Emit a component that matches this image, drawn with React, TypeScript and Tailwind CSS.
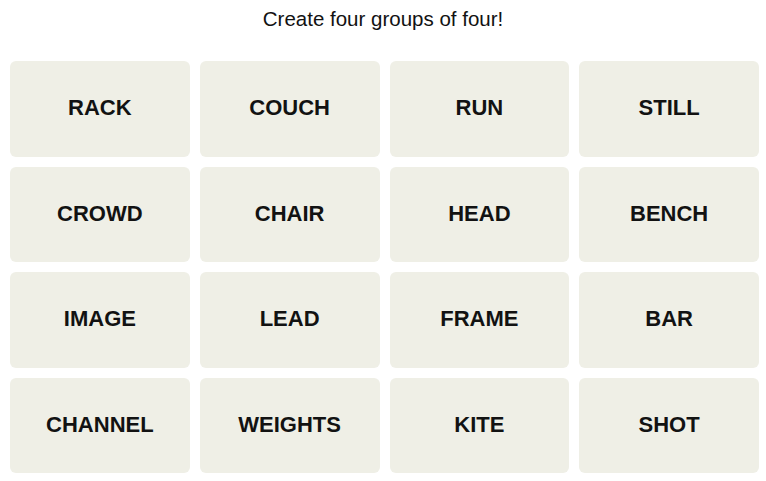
const words = [
  "RACK", "COUCH", "RUN", "STILL",
  "CROWD", "CHAIR", "HEAD", "BENCH",
  "IMAGE", "LEAD", "FRAME", "BAR",
  "CHANNEL", "WEIGHTS", "KITE", "SHOT",
];

export default function App() {
  return (
    <div className="w-[766px] h-[481px] bg-white font-['Liberation_Sans',Arial,sans-serif] text-[#121212]">
      <p className="pt-[7px] h-[61px] text-center text-[20.5px] leading-[24px]">Create four groups of four!</p>
      <div className="ml-[10px] w-[749px] grid grid-cols-4 gap-x-[10px] gap-y-[10px]">
        {words.map((w) => (
          <button
            key={w}
            className="h-[95.5px] pb-[2px] rounded-[6px] bg-[#efefe6] flex items-center justify-center text-[22px] font-bold uppercase"
          >
            {w}
          </button>
        ))}
      </div>
    </div>
  );
}
